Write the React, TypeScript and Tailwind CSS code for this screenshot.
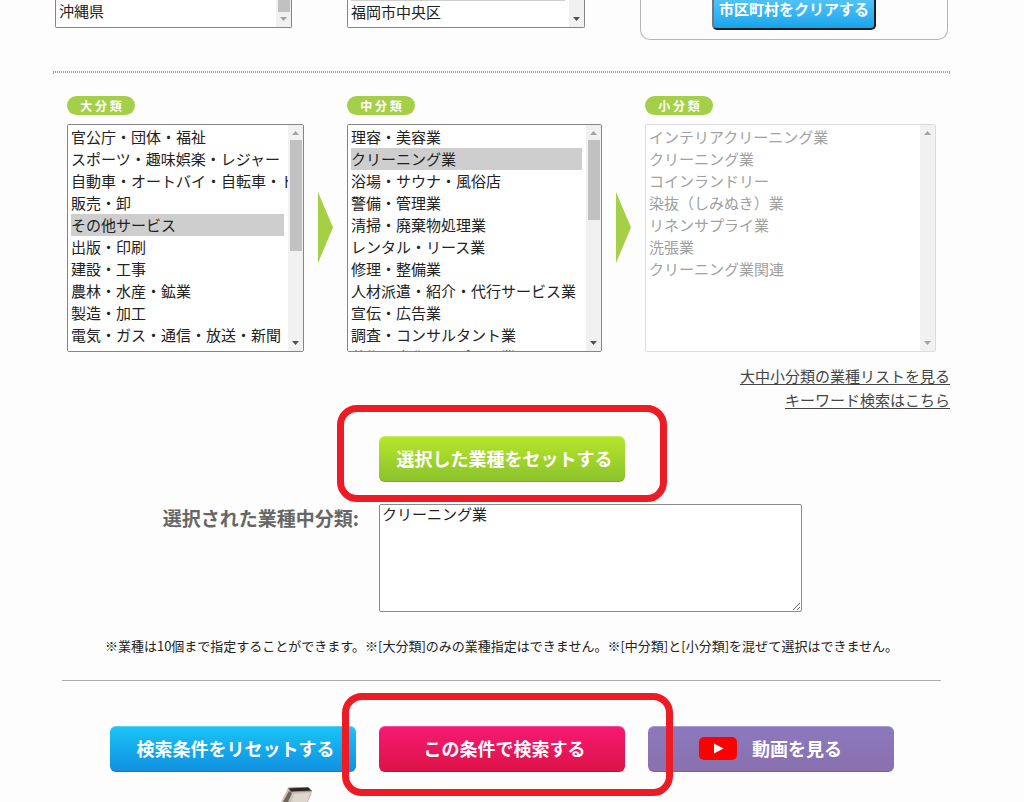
import React from "react";
import clsx from "clsx";

const LARGE = [
  "官公庁・団体・福祉",
  "スポーツ・趣味娯楽・レジャー",
  "自動車・オートバイ・自転車・ドライブ",
  "販売・卸",
  "その他サービス",
  "出版・印刷",
  "建設・工事",
  "農林・水産・鉱業",
  "製造・加工",
  "電気・ガス・通信・放送・新聞",
];

const MIDDLE = [
  "理容・美容業",
  "クリーニング業",
  "浴場・サウナ・風俗店",
  "警備・管理業",
  "清掃・廃棄物処理業",
  "レンタル・リース業",
  "修理・整備業",
  "人材派遣・紹介・代行サービス業",
  "宣伝・広告業",
  "調査・コンサルタント業",
  "芸術・文化・スポーツ業",
];

const SMALL = [
  "インテリアクリーニング業",
  "クリーニング業",
  "コインランドリー",
  "染抜（しみぬき）業",
  "リネンサプライ業",
  "洗張業",
  "クリーニング業関連",
];

function Arrow({ up, dim }: { up?: boolean; dim?: boolean }) {
  return (
    <svg viewBox="0 0 7 4" className={clsx("h-1 w-[7px]", dim ? "fill-[#a3a3a3]" : "fill-[#505050]")}>
      <path d={up ? "M0 4 3.5 0 7 4z" : "M0 0h7L3.5 4z"} />
    </svg>
  );
}

function Scrollbar({ thumb, downDim }: { thumb?: string; downDim?: boolean }) {
  return (
    <div aria-hidden="true" className="flex w-[15px] shrink-0 flex-col items-center bg-[#f1f1f1]">
      <div className="flex h-[15px] items-center pt-px">
        <Arrow up dim />
      </div>
      {thumb && <div className={clsx("w-3 bg-[#c1c1c1]", thumb)} />}
      <div className="mt-auto flex h-[17px] items-center">
        <Arrow dim={downDim} />
      </div>
    </div>
  );
}

type ListProps = {
  label: string;
  items: string[];
  selected?: string;
  disabled?: boolean;
  className?: string;
};

function ListBox({ label, items, selected, disabled, className }: ListProps) {
  return (
    <select
      multiple
      aria-label={label}
      disabled={disabled}
      defaultValue={selected ? [selected] : []}
      className={clsx(
        "min-w-0 flex-1 appearance-none overflow-x-hidden overflow-y-auto bg-white pr-1 pl-[3px] text-[15px] outline-none [scrollbar-width:none]",
        className,
      )}
    >
      {items.map((item) => (
        <option
          key={item}
          value={item}
          className={clsx(
            "h-[22px] min-h-0 p-0 leading-[22px] whitespace-nowrap checked:[background:linear-gradient(#cecece,#cecece)]",
            disabled ? "text-[#a0a0a0]" : "text-[#222]",
          )}
        >
          {item}
        </option>
      ))}
    </select>
  );
}

function Category(props: Omit<ListProps, "className"> & { title: string; thumb?: string }) {
  const { title, thumb, ...list } = props;
  return (
    <div className="min-w-0">
      <h2 className="flex h-[19px] w-[68px] items-center justify-center rounded-full bg-[#a5cf47] text-[12px] font-bold text-white">
        {title}
      </h2>
      <div
        className={clsx(
          "mt-[9px] flex h-[228px] overflow-hidden rounded-xs border bg-white",
          list.disabled ? "border-[#dcdcdc]" : "border-[#858585]",
        )}
      >
        <ListBox {...list} className="pt-px" />
        <Scrollbar thumb={thumb} downDim={list.disabled} />
      </div>
    </div>
  );
}

function Triangle() {
  return (
    <svg viewBox="0 0 15 71" aria-hidden="true" className="mt-24 h-[71px] w-[15px] fill-[#a5cf47]">
      <path d="M0 0 15 35.500 0 71z" />
    </svg>
  );
}

function BigButton({ className, children }: { className: string; children: React.ReactNode }) {
  return (
    <button
      type="button"
      className={clsx(
        "flex h-[46px] w-[246px] items-center justify-center rounded-md bg-linear-to-b pb-[2px] text-[18px] font-bold text-white shadow-[inset_0_1px_0_#ffffff40,inset_0_-1px_0_#00000020]",
        className,
      )}
    >
      {children}
    </button>
  );
}

function RedFrame({ className }: { className: string }) {
  return (
    <div
      aria-hidden="true"
      className={clsx("pointer-events-none absolute z-10 rounded-[20px] border-[7px] border-[#ed1c24]", className)}
    />
  );
}

export default function App() {
  return (
    <div className="bg-[#fdfdfd] pr-[74px] pl-[53px] font-['Noto_Sans_CJK_JP',sans-serif] text-[#222]">
      <section className="grid grid-cols-[237fr_238fr_308fr] items-start gap-x-[55px] px-[2px]">
        <div className="flex h-7 overflow-hidden rounded-b-xs border border-t-0 border-[#858585] bg-white">
          <ListBox label="都道府県" items={["沖縄県"]} />
          <div aria-hidden="true" className="flex w-[15px] flex-col items-center justify-between bg-[#f1f1f1] pb-[6px]">
            <div className="h-3 w-3 bg-[#c1c1c1]" />
            <Arrow dim />
          </div>
        </div>
        <div className="flex h-7 items-end overflow-hidden rounded-b-xs border border-t-0 border-[#858585] bg-white">
          <ListBox
            label="市区町村"
            items={["福岡市博多区", "福岡市中央区", "福岡市南区"]}
            selected="福岡市博多区"
            className="h-12"
          />
          <div aria-hidden="true" className="flex h-full w-[15px] items-end justify-center bg-[#f1f1f1] pb-[6px]">
            <Arrow />
          </div>
        </div>
        <div className="flex h-10 items-start justify-center rounded-b-[10px] border border-t-0 border-[#b5b5b5]">
          <button
            type="button"
            className="flex h-[30px] w-[164px] items-center justify-center rounded-b-[5px] border-2 border-t-0 border-[#1c1c1c] border-l-[#777] bg-linear-to-b from-[#4fc3f7] to-[#12a5ec] pb-[9px] text-[15px] font-bold whitespace-nowrap text-white"
          >
            市区町村をクリアする
          </button>
        </div>
      </section>

      <hr className="mt-[31px] h-[2px] border border-dotted border-[#a0a0a0]" />

      <section className="mt-[23px] grid grid-cols-[237fr_15px_255fr_15px_291fr] items-start gap-x-[14px] px-[14px]">
        <Category title="大 分 類" label="大分類" items={LARGE} selected="その他サービス" thumb="h-[111px]" />
        <Triangle />
        <Category title="中 分 類" label="中分類" items={MIDDLE} selected="クリーニング業" thumb="h-20" />
        <Triangle />
        <Category title="小 分 類" label="小分類" items={SMALL} disabled />
      </section>

      <nav className="mt-3 flex flex-col items-end text-[15px] leading-6 text-[#444]">
        <a href="#list" className="underline underline-offset-2">大中小分類の業種リストを見る</a>
        <a href="#keyword" className="underline underline-offset-2">キーワード検索はこちら</a>
      </nav>

      <div className="mt-6 flex justify-center">
        <div className="relative">
          <BigButton className="from-[#b8e62a] to-[#8ac22c] pl-[6px]">選択した業種をセットする</BigButton>
          <RedFrame className="-top-[31px] -right-[42px] -bottom-5 -left-[42px]" />
        </div>
      </div>

      <div className="mt-[22px] grid grid-cols-[306fr_423fr_128fr] gap-x-5">
        <label htmlFor="selected-industries" className="text-right text-[19px] leading-7 font-bold text-[#666]">
          選択された業種中分類:
        </label>
        <textarea
          id="selected-industries"
          defaultValue="クリーニング業"
          className="h-[108px] rounded-xs border border-[#8a8a8a] bg-white px-[2px] text-[15px] leading-[18px] text-[#222]"
        />
      </div>

      <p className="mt-6 text-center text-[13px] leading-5 whitespace-nowrap">
        ※業種は10個まで指定することができます。※[大分類]のみの業種指定はできません。※[中分類]と[小分類]を混ぜて選択はできません。
      </p>

      <hr className="mx-[9px] mt-6 border-[#aaa]" />

      <div className="mt-[45px] flex justify-center gap-[23px]">
        <BigButton className="from-[#1cc4f6] to-[#128fe0] pl-[6px]">検索条件をリセットする</BigButton>
        <div className="relative">
          <BigButton className="from-[#f71874] to-[#dc1245] pl-[6px]">この条件で検索する</BigButton>
          <RedFrame className="-top-[33px] -right-12 -bottom-6 -left-[37px]" />
        </div>
        <BigButton className="gap-[15px] from-[#8b79bd] to-[#8a70ae]">
          <svg viewBox="0 0 38 23" aria-hidden="true" className="h-[23px] w-[38px]">
            <rect width="38" height="23" rx="5" fill="#f00" />
            <path d="M15 6.500 24.500 11.500 15 16.500z" fill="#fff" />
          </svg>
          動画を見る
        </BigButton>
      </div>

      <svg viewBox="0 0 32 15" aria-hidden="true" className="mt-[15px] ml-[228px] block h-[15px] w-8">
        <path d="M0 15 7 1 10 5 31 4 30 8 27 15z" fill="#c9c0b6" />
        <path d="M2 15 8 4 11 6 7 15z" fill="#6f6459" />
        <path d="M7 1 27 0 31 4 10 5z" fill="#2c2622" />
        <path d="M7 1 27 0 31 4 10 5z" fill="none" stroke="#a59b90" strokeWidth=".8" />
        <path d="M13 7 29 6 26 15H10z" fill="#ded7ce" />
      </svg>
    </div>
  );
}
